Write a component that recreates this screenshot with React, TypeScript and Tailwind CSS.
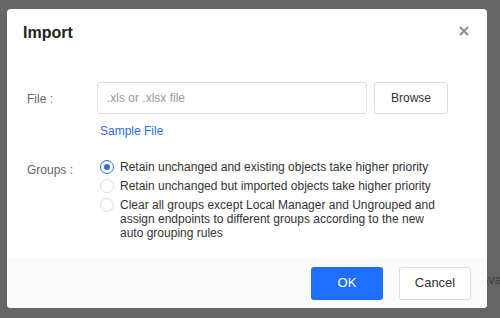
import { useState } from "react";

const options = [
  "Retain unchanged and existing objects take higher priority",
  "Retain unchanged but imported objects take higher priority",
  "Clear all groups except Local Manager and Ungrouped and assign endpoints to different groups according to the new auto grouping rules",
];

export default function App() {
  const [picked, setPicked] = useState(0);

  return (
    <div className="relative h-[318px] w-[500px] overflow-hidden bg-[#666666] font-['Liberation_Sans',Arial,sans-serif]">
      {/* page text showing through the overlay, partly hidden by the dialog */}
      <span className="absolute left-[481px] top-[270px] text-[13px] text-[#3c3c3c]">ava</span>

      <div className="absolute left-[7px] top-[9px] flex h-[299px] w-[480px] flex-col overflow-hidden rounded-[4px] bg-white">
        <div className="flex h-[48px] items-start justify-between pl-[16px] pr-[18px] pt-[15px]">
          <h2 className="text-[16px] font-bold leading-[18px] text-[#222]">Import</h2>
          <button type="button" className="mt-[1px] flex h-[11px] w-[11px] items-center justify-center text-[#8a8a94]">
            <svg width="10" height="10" viewBox="0 0 10 10">
              <path d="M1 1L9 9M9 1L1 9" stroke="currentColor" strokeWidth="1.8" />
            </svg>
          </button>
        </div>

        <div className="flex-1 pl-[20px] pr-[39px] pt-[25px] text-[12px]">
          <div className="flex">
            <div className="w-[70px] pt-[8px] text-[#666]">File :</div>
            <div className="flex-1">
              <div className="flex gap-[7px]">
                <input
                  placeholder=".xls or .xlsx file"
                  className="h-[32px] w-[270px] rounded-[3px] border border-[#e1e1e8] px-[9px] text-[12px] placeholder:text-[#999] outline-none"
                />
                <button
                  type="button"
                  className="h-[32px] w-[74px] rounded-[3px] border border-[#dcdce2] bg-white text-[12px] text-[#333]"
                >
                  Browse
                </button>
              </div>
              <a className="ml-[3px] mt-[8px] block text-[12px] text-[#2e6bf5]">Sample File</a>
            </div>
          </div>

          <div className="mt-[20px] flex">
            <div className="w-[70px] pt-[1px] text-[#666]">Groups :</div>
            <div className="flex flex-1 flex-col gap-[5px] pl-[3px]">
              {options.map((text, i) => (
                <label key={i} className="flex cursor-pointer items-start gap-[6px] leading-[14px] text-[#333]">
                  <span
                    onClick={() => setPicked(i)}
                    className={`flex h-[14px] w-[14px] shrink-0 items-center justify-center rounded-full border ${
                      picked === i ? "border-[#2e6bf5]" : "border-[#dcdcdc]"
                    }`}
                  >
                    {picked === i && <span className="h-[6px] w-[6px] rounded-full bg-[#2e6bf5]" />}
                  </span>
                  <span>{text}</span>
                </label>
              ))}
            </div>
          </div>
        </div>

        <div className="flex h-[50px] items-center justify-end gap-[16px] bg-[#fbfbfb] pr-[16px]">
          <button type="button" className="h-[33px] w-[72px] rounded-[3px] bg-[#1f6fff] text-[13px] text-white">
            OK
          </button>
          <button
            type="button"
            className="h-[33px] w-[72px] rounded-[3px] border border-[#dcdce4] bg-white text-[13px] text-[#333]"
          >
            Cancel
          </button>
        </div>
      </div>
    </div>
  );
}
